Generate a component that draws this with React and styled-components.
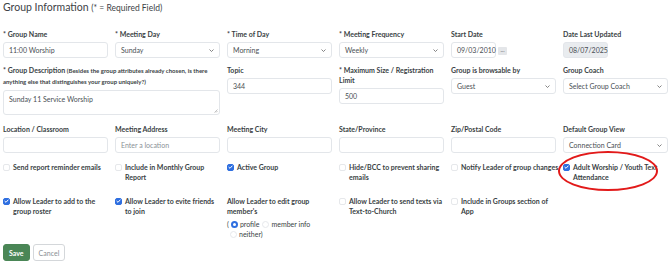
import React from "react";
import styled, { createGlobalStyle } from "styled-components";

const GlobalStyle = createGlobalStyle`
  body {
    margin: 0;
    background: #fff;
    font-family: Lato, "Noto Sans", sans-serif;
    color: #343a40;
  }
`;

const Page = styled.div`
  width: 670px;
  height: 268px;
  padding: 0 3px;
  box-sizing: border-box;
  overflow: hidden;
`;

const Title = styled.h2`
  margin: 0 0 14px;
  font-size: 10.5px;
  line-height: 14px;
  font-weight: 400;
  color: #3d4246;
`;

const TitleNote = styled.span`
  font-size: 8.5px;
`;

const Row = styled.div`
  display: grid;
  grid-template-columns: repeat(6, 105px);
  column-gap: 7px;
  align-items: start;
  margin-bottom: ${(p) => p.$gap}px;
`;

const Field = styled.div`
  display: flex;
  flex-direction: column;
  grid-column: span ${(p) => p.$span || 1};
`;

const Label = styled.label`
  font-size: 7px;
  line-height: 10px;
  font-weight: 700;
  color: #3a3f44;
  margin-bottom: 3px;
`;

const LabelNote = styled.span`
  font-size: 6px;
  line-height: 10px;
`;

const Input = styled.div`
  height: 16px;
  box-sizing: border-box;
  width: ${(p) => p.$width || "100%"};
  border: 1px solid #e3e6ea;
  border-radius: 3px;
  background: ${(p) => (p.$disabled ? "#e9ecef" : "#fff")};
  padding: 0 5px;
  font-size: 7px;
  line-height: 14px;
  color: ${(p) => (p.$placeholder ? "#8a9096" : "#4a4f54")};
  white-space: nowrap;
`;

const TextArea = styled(Input)`
  height: 25px;
  line-height: 10px;
  padding-top: 3px;
  position: relative;
`;

const Grip = styled.svg`
  position: absolute;
  right: 1px;
  bottom: 1px;
`;

const SelectBox = styled(Input)`
  display: flex;
  align-items: center;
  justify-content: space-between;
`;

const DateRow = styled.div`
  display: flex;
  align-items: flex-end;
  gap: 2px;
`;

const DotsButton = styled.div`
  width: 9px;
  height: 8px;
  background: #e4e6e9;
  border-radius: 1px;
  font-size: 6px;
  line-height: 6px;
  text-align: center;
  color: #555;
  margin-bottom: 3px;
`;

const CheckItem = styled.div`
  position: relative;
  display: flex;
  align-items: flex-start;
  gap: 3px;
  font-size: 7px;
  line-height: 10px;
  font-weight: 700;
  color: #3a3f44;
  white-space: ${(p) => (p.$nowrap ? "nowrap" : "normal")};
`;

const Box = styled.span`
  flex: none;
  width: 7px;
  height: 7px;
  margin-top: 1.5px;
  box-sizing: border-box;
  border-radius: 2px;
  border: 1px solid ${(p) => (p.$on ? "#2f6fe0" : "#e6e8eb")};
  background: ${(p) => (p.$on ? "#2f6fe0" : "#fff")};
  display: flex;
  align-items: center;
  justify-content: center;
`;

const Plain = styled.div`
  font-size: 7px;
  line-height: 10px;
  font-weight: 700;
  color: #3a3f44;
`;

const Radios = styled.div`
  margin-top: 3px;
  font-size: 7px;
  line-height: 10px;
  color: #3a3f44;
  display: flex;
  flex-wrap: wrap;
  align-items: center;
  column-gap: 3px;
  width: 90px;
`;

const RadioLabel = styled.span`
  display: inline-flex;
  align-items: center;
  gap: 2px;
  margin-left: ${(p) => p.$indent || 0}px;
`;

const Dot = styled.span`
  width: 7px;
  height: 7px;
  box-sizing: border-box;
  border-radius: 50%;
  border: ${(p) => (p.$on ? "2px solid #2f6fe0" : "1px solid #e6e8eb")};
  background: #fff;
`;

const Ring = styled.div`
  position: absolute;
  left: -5px;
  top: -11px;
  width: 100px;
  height: 40px;
  box-sizing: border-box;
  border: 2px solid #e21a1a;
  border-radius: 50%;
  pointer-events: none;
`;

const Buttons = styled.div`
  display: flex;
  gap: 3px;
`;

const Button = styled.button`
  height: 17px;
  padding: 0 5px;
  border-radius: 3px;
  font-family: inherit;
  font-size: 7px;
  font-weight: ${(p) => (p.$primary ? 700 : 400)};
  border: 1px solid ${(p) => (p.$primary ? "#4a8656" : "#d4d7da")};
  background: ${(p) => (p.$primary ? "#4a8656" : "#fff")};
  color: ${(p) => (p.$primary ? "#fff" : "#8a8f94")};
`;

const Chevron = () => (
  <svg width="5" height="3" viewBox="0 0 5 3">
    <polyline points="0.5,0.5 2.5,2.5 4.5,0.5" fill="none" stroke="#666" strokeWidth="0.8" />
  </svg>
);

const Tick = () => (
  <svg width="5" height="4" viewBox="0 0 5 4">
    <polyline points="0.6,2 2,3.3 4.4,0.7" fill="none" stroke="#fff" strokeWidth="1" />
  </svg>
);

const Check = ({ on, children, nowrap, ring }) => (
  <CheckItem $nowrap={nowrap}>
    <Box $on={on}>{on && <Tick />}</Box>
    <span>{children}</span>
    {ring && <Ring />}
  </CheckItem>
);

const Select = ({ value }) => (
  <SelectBox>
    <span>{value}</span>
    <Chevron />
  </SelectBox>
);

export default function App() {
  return (
    <Page>
      <GlobalStyle />
      <Title>
        Group Information <TitleNote>(* = Required Field)</TitleNote>
      </Title>

      <Row $gap={7}>
        <Field>
          <Label>* Group Name</Label>
          <Input>11:00 Worship</Input>
        </Field>
        <Field>
          <Label>* Meeting Day</Label>
          <Select value="Sunday" />
        </Field>
        <Field>
          <Label>* Time of Day</Label>
          <Select value="Morning" />
        </Field>
        <Field>
          <Label>* Meeting Frequency</Label>
          <Select value="Weekly" />
        </Field>
        <Field>
          <Label>Start Date</Label>
          <DateRow>
            <Input $width="45px">09/03/2010</Input>
            <DotsButton>...</DotsButton>
          </DateRow>
        </Field>
        <Field>
          <Label>Date Last Updated</Label>
          <Input $width="45px" $disabled>08/07/2025</Input>
        </Field>
      </Row>

      <Row $gap={9}>
        <Field $span={2}>
          <Label>
            * Group Description{" "}
            <LabelNote>
              (Besides the group attributes already chosen, is there anything else that
              distinguishes your group uniquely?)
            </LabelNote>
          </Label>
          <TextArea>
            Sunday 11 Service Worship
            <Grip width="4" height="4" viewBox="0 0 4 4">
              <path d="M0.5 3.5 L3.5 0.5 M2 3.5 L3.5 2" stroke="#999" strokeWidth="0.6" />
            </Grip>
          </TextArea>
        </Field>
        <Field>
          <Label>Topic</Label>
          <Input>344</Input>
        </Field>
        <Field>
          <Label>* Maximum Size / Registration Limit</Label>
          <Input>500</Input>
        </Field>
        <Field>
          <Label>Group is browsable by</Label>
          <Select value="Guest" />
        </Field>
        <Field>
          <Label>Group Coach</Label>
          <Select value="Select Group Coach" />
        </Field>
      </Row>

      <Row $gap={9}>
        <Field>
          <Label>Location / Classroom</Label>
          <Input />
        </Field>
        <Field>
          <Label>Meeting Address</Label>
          <Input $placeholder>Enter a location</Input>
        </Field>
        <Field>
          <Label>Meeting City</Label>
          <Input />
        </Field>
        <Field>
          <Label>State/Province</Label>
          <Input />
        </Field>
        <Field>
          <Label>Zip/Postal Code</Label>
          <Input />
        </Field>
        <Field>
          <Label>Default Group View</Label>
          <Select value="Connection Card" />
        </Field>
      </Row>

      <Row $gap={14}>
        <Check>Send report reminder emails</Check>
        <Check>Include in Monthly Group Report</Check>
        <Check on>Active Group</Check>
        <Check>Hide/BCC to prevent sharing emails</Check>
        <Check nowrap>Notify Leader of group changes</Check>
        <Check on ring>Adult Worship / Youth Text Attendance</Check>
      </Row>

      <Row $gap={5}>
        <Check on>Allow Leader to add to the group roster</Check>
        <Check on>Allow Leader to evite friends to join</Check>
        <Field>
          <Plain>Allow Leader to edit group member's</Plain>
          <Radios>
            <RadioLabel>
              ( <Dot $on /> profile
            </RadioLabel>
            <RadioLabel>
              <Dot /> member info
            </RadioLabel>
            <RadioLabel $indent={3}>
              <Dot /> neither)
            </RadioLabel>
          </Radios>
        </Field>
        <Check>Allow Leader to send texts via Text-to-Church</Check>
        <Check>Include in Groups section of App</Check>
      </Row>

      <Buttons>
        <Button $primary>Save</Button>
        <Button>Cancel</Button>
      </Buttons>
    </Page>
  );
}
